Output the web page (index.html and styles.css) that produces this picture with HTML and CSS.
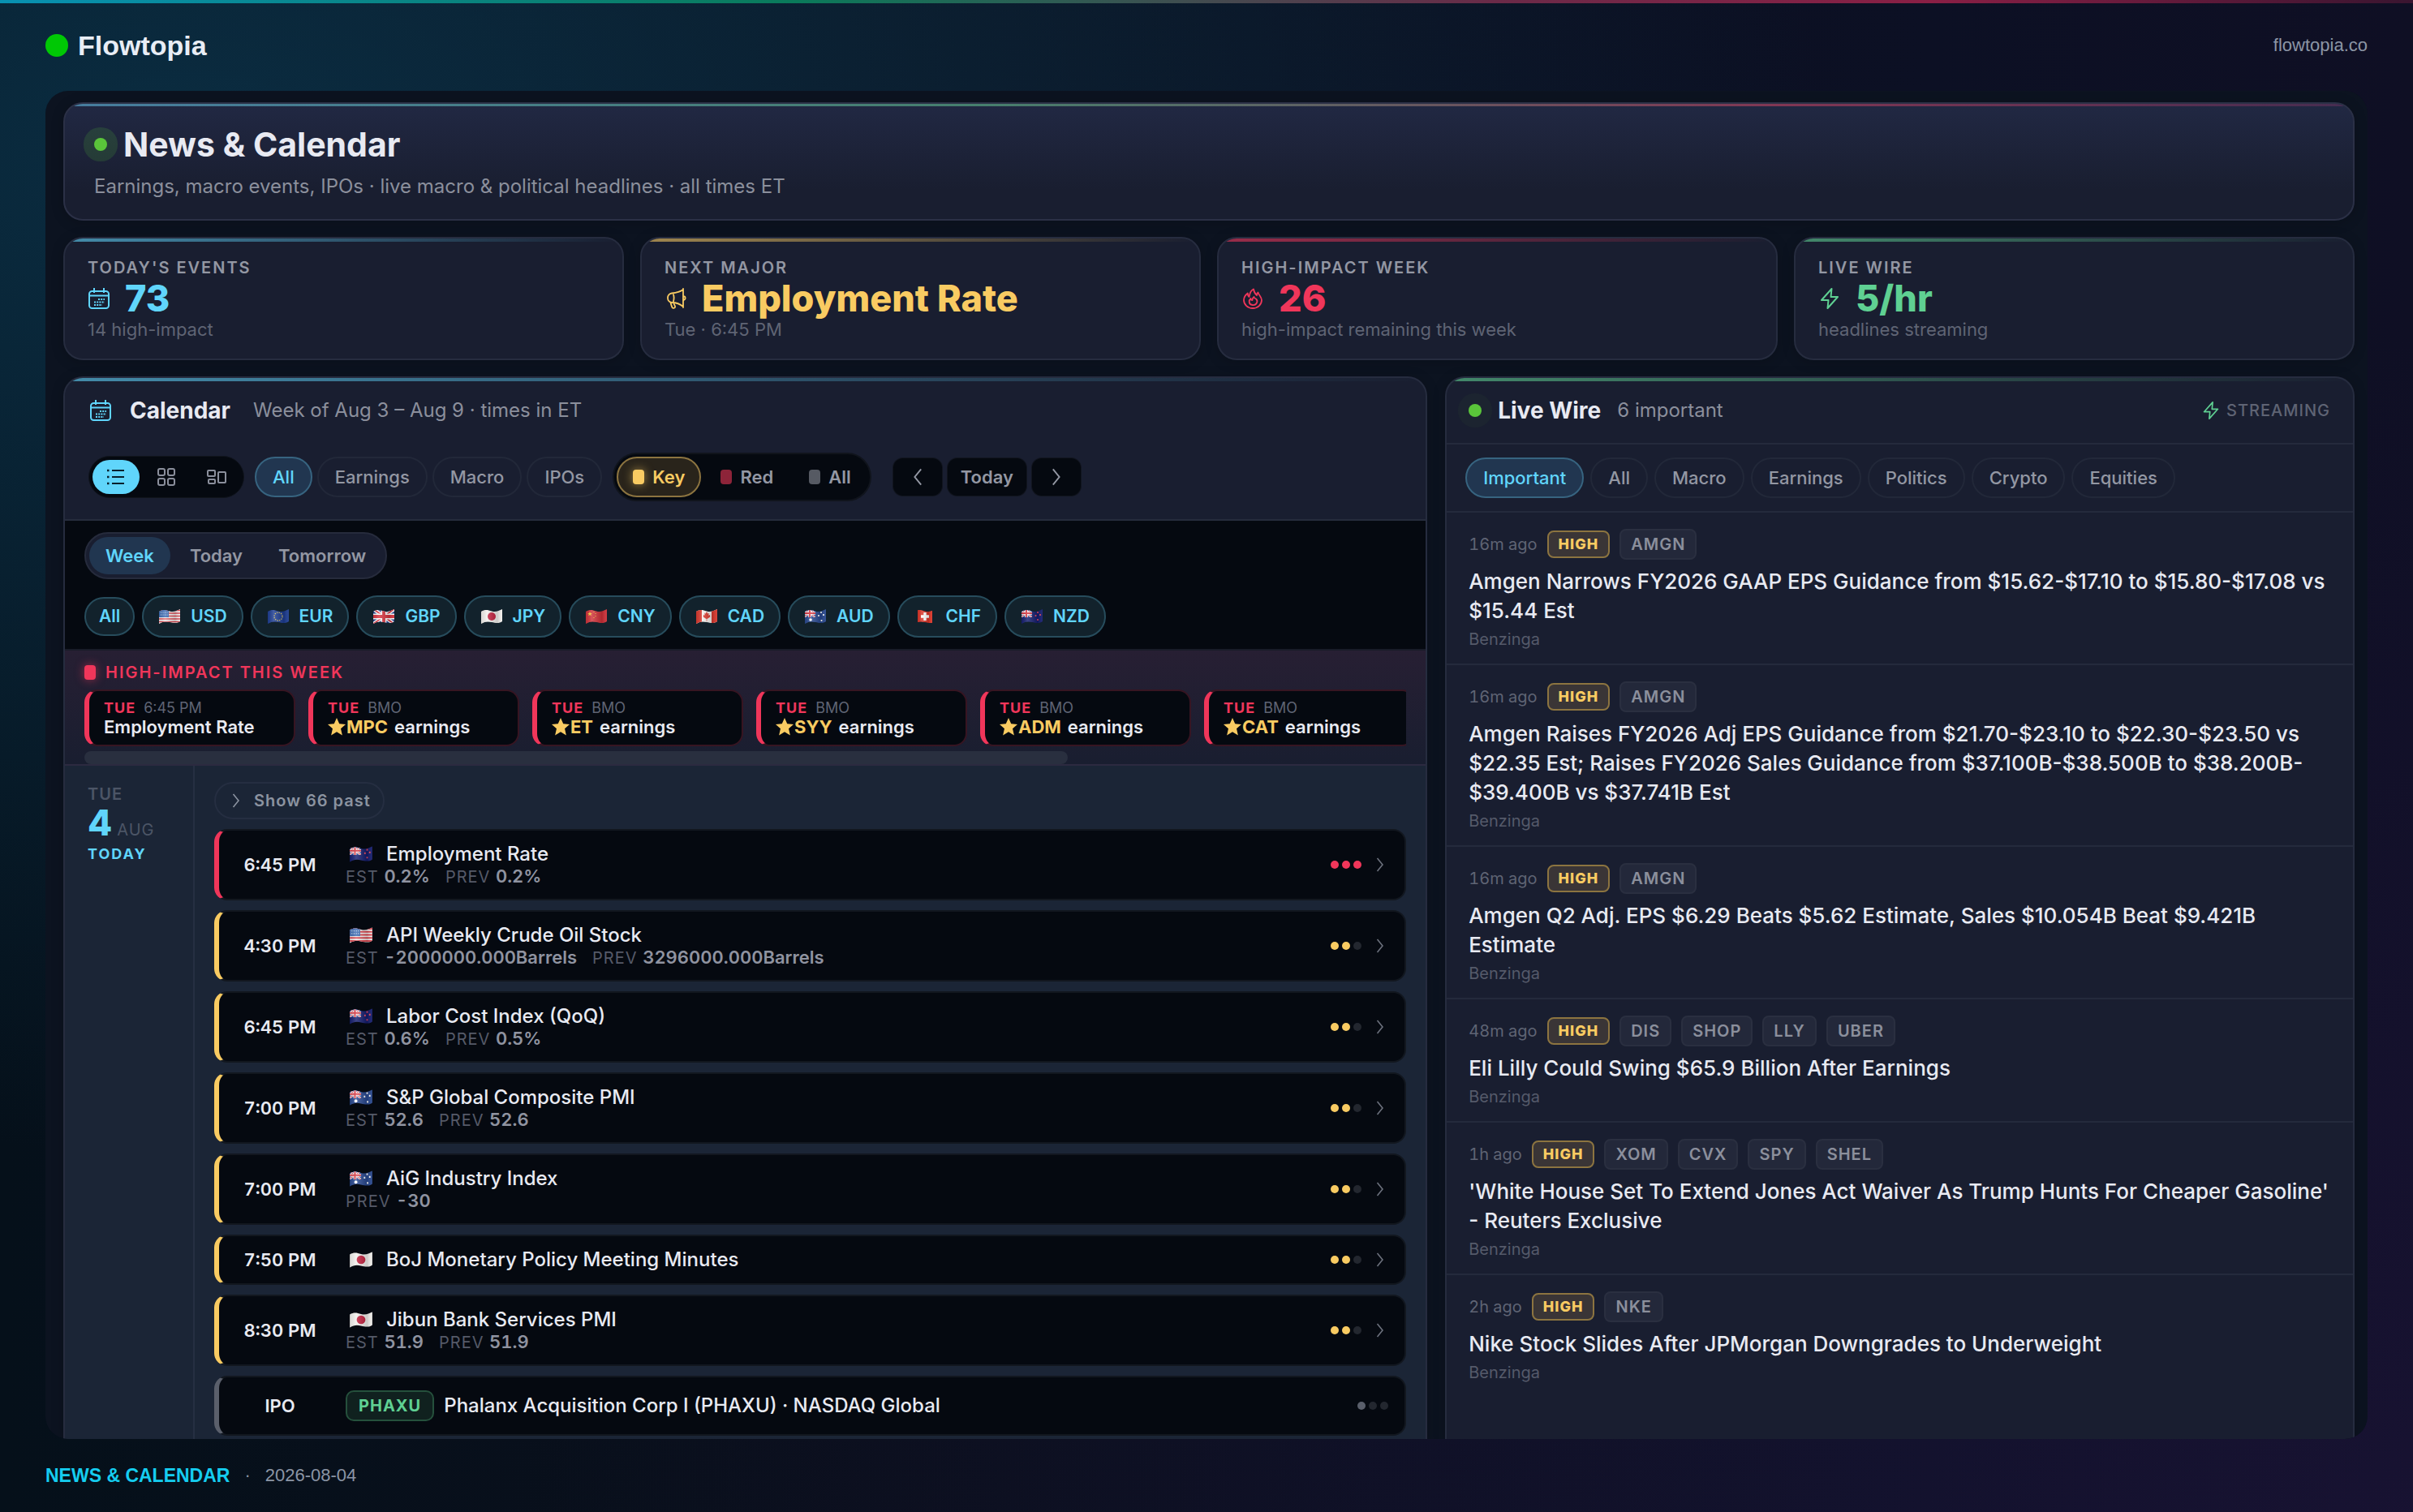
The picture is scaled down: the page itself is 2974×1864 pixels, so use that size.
FILE: index.html
```html
<!DOCTYPE html>
<html lang="en">
<head>
<meta charset="utf-8">
<title>Flowtopia - News &amp; Calendar</title>
<link rel="stylesheet" href="styles.css">
</head>
<body>
<svg class="defs" aria-hidden="true">
  <defs>
    <clipPath id="wave"><path d="M1 4C6 1 9 2 14 3.500S23 3 27 1V16C23 19 19 18 14 17S6 16 1 19Z"/></clipPath>
    <linearGradient id="fold" x1="0" x2="1" y1="0" y2="0">
      <stop offset="0" stop-color="#000" stop-opacity=".1"/><stop offset=".3" stop-color="#fff" stop-opacity=".18"/>
      <stop offset=".75" stop-color="#000" stop-opacity=".16"/><stop offset="1" stop-color="#fff" stop-opacity=".06"/>
    </linearGradient>
  </defs>
  <symbol id="union" viewBox="0 0 14 10">
    <rect width="14" height="10" fill="#1f3a8a"/>
    <path d="M0 0L14 10M14 0L0 10" stroke="#fff" stroke-width="2.200"/><path d="M0 0L14 10M14 0L0 10" stroke="#d8343f" stroke-width=".9"/>
    <path d="M7 0V10M0 5H14" stroke="#fff" stroke-width="3.400"/><path d="M7 0V10M0 5H14" stroke="#d8343f" stroke-width="1.900"/>
  </symbol>
  <symbol id="us" viewBox="0 0 28 20"><g clip-path="url(#wave)"><rect width="28" height="20" fill="#f3f0f0"/><path d="M0 2.500H28M0 6H28M0 9.500H28M0 13H28M0 16.500H28" stroke="#d8424b" stroke-width="1.700"/><rect width="13" height="11" fill="#3d6cb4"/><path d="M3 5h9M3 8h9" stroke="#dfe8f5" stroke-dasharray="1 1.500"/><rect width="28" height="20" fill="url(#fold)"/></g></symbol>
  <symbol id="eu" viewBox="0 0 28 20"><g clip-path="url(#wave)"><rect width="28" height="20" fill="#1c3c92"/><circle cx="14" cy="10" r="5" fill="none" stroke="#d9c25c" stroke-width="1.300" stroke-dasharray="1.300 1.320"/><rect width="28" height="20" fill="url(#fold)"/></g></symbol>
  <symbol id="gb" viewBox="0 0 28 20"><g clip-path="url(#wave)"><use href="#union" width="28" height="20"/><rect width="28" height="20" fill="url(#fold)"/></g></symbol>
  <symbol id="jp" viewBox="0 0 28 20"><g clip-path="url(#wave)"><rect width="28" height="20" fill="#f4f1ee"/><circle cx="14" cy="10" r="5" fill="#c2213f"/><rect width="28" height="20" fill="url(#fold)"/></g></symbol>
  <symbol id="cn" viewBox="0 0 28 20"><g clip-path="url(#wave)"><rect width="28" height="20" fill="#cf2f37"/><path d="M6 4l.8 2h2l-1.600 1.300.6 2L6 8.100 4.200 9.300l.6-2L3.200 6h2z" fill="#f6cf3d"/><path d="M11 4v1M13 6v1M13 9v1M11 11v1" stroke="#f6cf3d"/><rect width="28" height="20" fill="url(#fold)"/></g></symbol>
  <symbol id="ca" viewBox="0 0 28 20"><g clip-path="url(#wave)"><rect width="28" height="20" fill="#f4f1ee"/><path d="M0 0H8V20H0zM20 0H28V20H20z" fill="#d9372c"/><path d="M14 4l1.300 2.400 1.400-.6-.4 3 2-1-.4 1.800.7.600L15 12.800l-.7.200V16h-.6v-3l-.7-.2-3.600-2.600.7-.6L9.700 7.800l2 1-.4-3 1.400.6z" fill="#d9372c"/><rect width="28" height="20" fill="url(#fold)"/></g></symbol>
  <symbol id="au" viewBox="0 0 28 20"><g clip-path="url(#wave)"><rect width="28" height="20" fill="#27478f"/><use href="#union" y="1" width="14" height="10"/><circle cx="8" cy="14" r="1.800" fill="#fff"/><path d="M21 4v2M18 8v2M24 7v2M21.500 14v2" stroke="#fff" stroke-width="1.700"/><rect width="28" height="20" fill="url(#fold)"/></g></symbol>
  <symbol id="nz" viewBox="0 0 28 20"><g clip-path="url(#wave)"><rect width="28" height="20" fill="#141c6e"/><use href="#union" y="1" width="14" height="10"/><path d="M21 4v2M18.500 8v2M24 7v2M21 13v2" stroke="#e0455c" stroke-width="1.700"/><rect width="28" height="20" fill="url(#fold)"/></g></symbol>
  <symbol id="ch" viewBox="0 0 28 20"><g clip-path="url(#wave)"><rect x="5" width="18" height="20" fill="#dc3427"/><path d="M14 5v10M9 10h10" stroke="#fff" stroke-width="3.400"/><rect x="5" width="18" height="20" fill="url(#fold)"/></g></symbol>
  <symbol id="cal" viewBox="0 0 26 26" fill="none" stroke="currentColor" stroke-width="2"><rect x="1" y="4" width="24" height="21" rx="3.500"/><path d="M1 9.500H25M7 0V6M19 0V6"/><path d="M12 14H20M7 17.500H20M7 21H17" stroke-dasharray="2 1.200"/></symbol>
  <symbol id="horn" viewBox="0 0 26 26" fill="none" stroke="currentColor" stroke-width="1.800" stroke-linejoin="round" stroke-linecap="round"><path d="M22 2C18 5 13 6 8 6.500A5.800 5.800 0 0 0 8 18C13 18 18 19.500 22 23M22 1V24M9.500 6.500C11 10 11 14 9.500 18M22 10C25.500 10.500 25.500 14.500 22 15M6.500 18C7 20 7.500 22 8.500 24C9.500 25.500 12.500 25 12 22.500C11.500 21 10.500 20.500 10.500 18.500"/></symbol>
  <symbol id="flame" viewBox="0 0 26 26" fill="none" stroke="currentColor" stroke-width="1.800" stroke-linejoin="round"><path d="M14 1.500C9 4 9.500 8 8.500 11C7 10 6.800 8.500 6.800 6.500C3.500 9 2 12 2 15A11 10 0 0 0 24 15C24 11 21 10 19.500 5.500C18.500 6.500 18 8 18 9C15.500 7 14.500 5 14 1.500Z"/><path d="M14.500 11C13 12 12.500 13.500 12.500 15C11 15 10.500 14 10.500 13C8 15 7.500 20.500 12.800 21C18 21.500 20 16 17 13.500C15.500 13 14.700 12.500 14.500 11Z"/></symbol>
  <symbol id="bolt" viewBox="0 0 26 26" fill="none" stroke="currentColor" stroke-width="2" stroke-linejoin="round"><path d="M15.500 1L3 15H11.500L10.500 25L23 11H14.500Z"/></symbol>
  <symbol id="next" viewBox="0 0 20 20" fill="none" stroke="currentColor" stroke-width="1.600"><path d="M6.500 2L13 10L6.500 18"/></symbol>
  <symbol id="prev" viewBox="0 0 20 20" fill="none" stroke="currentColor" stroke-width="1.600"><path d="M13.500 2L7 10L13.500 18"/></symbol>
  <symbol id="star" viewBox="0 0 24 24" fill="currentColor"><path d="M12 0L15.500 8L24 8.800L17.500 14.500L19.500 23.500L12 18.700L4.500 23.500L6.500 14.500L0 8.800L8.500 8Z"/></symbol>
</svg>

<header class="topbar">
  <a class="brand" href="#"><span class="brand-dot"></span>Flowtopia</a>
  <a class="site" href="#">flowtopia.co</a>
</header>

<main class="app">
  <section class="card hero">
    <h1><span class="live-dot"></span>News &amp; Calendar</h1>
    <p>Earnings, macro events, IPOs · live macro &amp; political headlines · all times ET</p>
  </section>

  <section class="stats">
    <div class="card stat blue">
      <div class="label">TODAY'S EVENTS</div>
      <div class="value"><svg><use href="#cal"/></svg>73</div>
      <div class="sub">14 high-impact</div>
    </div>
    <div class="card stat gold">
      <div class="label">NEXT MAJOR</div>
      <div class="value"><svg><use href="#horn"/></svg>Employment Rate</div>
      <div class="sub">Tue · 6:45 PM</div>
    </div>
    <div class="card stat red">
      <div class="label">HIGH-IMPACT WEEK</div>
      <div class="value"><svg><use href="#flame"/></svg>26</div>
      <div class="sub">high-impact remaining this week</div>
    </div>
    <div class="card stat green">
      <div class="label">LIVE WIRE</div>
      <div class="value"><svg><use href="#bolt"/></svg>5/hr</div>
      <div class="sub">headlines streaming</div>
    </div>
  </section>

  <div class="panels">
    <section class="card panel blue">
      <div class="cal-head">
        <div class="title-row"><svg class="title-icon"><use href="#cal"/></svg><h2>Calendar</h2><span>Week of Aug 3 – Aug 9 · times in ET</span></div>
        <div class="controls">
          <div class="views">
            <button class="on" aria-label="List"><svg viewBox="0 0 24 24"><path d="M7 4H22M7 12H22M7 20H22"/><path d="M1 4H3.500M1 12H3.500M1 20H3.500" stroke-width="2.500"/></svg></button>
            <button aria-label="Grid"><svg viewBox="0 0 24 24"><rect x="2" y="2" width="8" height="8" rx="2"/><rect x="14" y="2" width="8" height="8" rx="2"/><rect x="2" y="14" width="8" height="8" rx="2"/><rect x="14" y="14" width="8" height="8" rx="2"/></svg></button>
            <button aria-label="Board"><svg viewBox="0 0 24 24"><rect x="1" y="4" width="9" height="7" rx="1"/><rect x="14" y="6" width="9" height="13" rx="1"/><rect x="2" y="15" width="8" height="5" rx="1"/></svg></button>
          </div>
          <div class="chips">
            <button class="chip on">All</button>
            <button class="chip">Earnings</button>
            <button class="chip">Macro</button>
            <button class="chip">IPOs</button>
          </div>
          <div class="levels">
            <button class="key"><i></i>Key</button>
            <button class="hot"><i></i>Red</button>
            <button><i></i>All</button>
          </div>
          <div class="nav">
            <button aria-label="Previous week"><svg><use href="#prev"/></svg></button>
            <button class="today">Today</button>
            <button aria-label="Next week"><svg><use href="#next"/></svg></button>
          </div>
        </div>
      </div>

      <div class="toolbar">
        <div class="range"><button class="on">Week</button><button>Today</button><button>Tomorrow</button></div>
        <div class="currencies">
          <button class="all">All</button>
          <button><svg class="flag"><use href="#us"/></svg>USD</button>
          <button><svg class="flag"><use href="#eu"/></svg>EUR</button>
          <button><svg class="flag"><use href="#gb"/></svg>GBP</button>
          <button><svg class="flag"><use href="#jp"/></svg>JPY</button>
          <button><svg class="flag"><use href="#cn"/></svg>CNY</button>
          <button><svg class="flag"><use href="#ca"/></svg>CAD</button>
          <button><svg class="flag"><use href="#au"/></svg>AUD</button>
          <button><svg class="flag"><use href="#ch"/></svg>CHF</button>
          <button><svg class="flag"><use href="#nz"/></svg>NZD</button>
        </div>
      </div>

      <div class="impact">
        <h3><i></i>HIGH-IMPACT THIS WEEK</h3>
        <div class="impact-list">
          <div class="impact-card"><p><b>TUE</b>6:45 PM</p><strong>Employment Rate</strong></div>
          <div class="impact-card"><p><b>TUE</b>BMO</p><strong><em><svg><use href="#star"/></svg>MPC</em> earnings</strong></div>
          <div class="impact-card"><p><b>TUE</b>BMO</p><strong><em><svg><use href="#star"/></svg>ET</em> earnings</strong></div>
          <div class="impact-card"><p><b>TUE</b>BMO</p><strong><em><svg><use href="#star"/></svg>SYY</em> earnings</strong></div>
          <div class="impact-card"><p><b>TUE</b>BMO</p><strong><em><svg><use href="#star"/></svg>ADM</em> earnings</strong></div>
          <div class="impact-card"><p><b>TUE</b>BMO</p><strong><em><svg><use href="#star"/></svg>CAT</em> earnings</strong></div>
        </div>
        <div class="scroll"><div></div></div>
      </div>

      <div class="day">
        <div class="date">
          <div class="dow">TUE</div>
          <div class="num">4<span>AUG</span></div>
          <div class="now">TODAY</div>
        </div>
        <div class="events">
          <button class="past"><svg><use href="#next"/></svg>Show 66 past</button>
          <div class="event high">
            <time>6:45 PM</time>
            <div class="info"><h4><svg class="flag"><use href="#nz"/></svg>Employment Rate</h4><p>EST <b>0.2%</b><span>PREV <b>0.2%</b></span></p></div>
            <div class="dots"><i></i><i></i><i></i></div><svg class="more"><use href="#next"/></svg>
          </div>
          <div class="event">
            <time>4:30 PM</time>
            <div class="info"><h4><svg class="flag"><use href="#us"/></svg>API Weekly Crude Oil Stock</h4><p>EST <b>-2000000.000Barrels</b><span>PREV <b>3296000.000Barrels</b></span></p></div>
            <div class="dots"><i></i><i></i><i></i></div><svg class="more"><use href="#next"/></svg>
          </div>
          <div class="event">
            <time>6:45 PM</time>
            <div class="info"><h4><svg class="flag"><use href="#nz"/></svg>Labor Cost Index (QoQ)</h4><p>EST <b>0.6%</b><span>PREV <b>0.5%</b></span></p></div>
            <div class="dots"><i></i><i></i><i></i></div><svg class="more"><use href="#next"/></svg>
          </div>
          <div class="event">
            <time>7:00 PM</time>
            <div class="info"><h4><svg class="flag"><use href="#au"/></svg>S&amp;P Global Composite PMI</h4><p>EST <b>52.6</b><span>PREV <b>52.6</b></span></p></div>
            <div class="dots"><i></i><i></i><i></i></div><svg class="more"><use href="#next"/></svg>
          </div>
          <div class="event">
            <time>7:00 PM</time>
            <div class="info"><h4><svg class="flag"><use href="#au"/></svg>AiG Industry Index</h4><p>PREV <b>-30</b></p></div>
            <div class="dots"><i></i><i></i><i></i></div><svg class="more"><use href="#next"/></svg>
          </div>
          <div class="event">
            <time>7:50 PM</time>
            <div class="info"><h4><svg class="flag"><use href="#jp"/></svg>BoJ Monetary Policy Meeting Minutes</h4></div>
            <div class="dots"><i></i><i></i><i></i></div><svg class="more"><use href="#next"/></svg>
          </div>
          <div class="event">
            <time>8:30 PM</time>
            <div class="info"><h4><svg class="flag"><use href="#jp"/></svg>Jibun Bank Services PMI</h4><p>EST <b>51.9</b><span>PREV <b>51.9</b></span></p></div>
            <div class="dots"><i></i><i></i><i></i></div><svg class="more"><use href="#next"/></svg>
          </div>
          <div class="event low">
            <time>IPO</time>
            <div class="info"><h4><span class="ticker">PHAXU</span>Phalanx Acquisition Corp I (PHAXU) · NASDAQ Global</h4></div>
            <div class="dots"><i></i><i></i><i></i></div>
          </div>
        </div>
      </div>
    </section>

    <section class="card panel green">
      <div class="wire-head">
        <span class="live-dot"></span><h2>Live Wire</h2><span>6 important</span>
        <div class="streaming"><svg><use href="#bolt"/></svg>STREAMING</div>
      </div>
      <div class="wire-tabs">
        <button class="chip on">Important</button>
        <button class="chip">All</button>
        <button class="chip">Macro</button>
        <button class="chip">Earnings</button>
        <button class="chip">Politics</button>
        <button class="chip">Crypto</button>
        <button class="chip">Equities</button>
      </div>
      <article class="news">
        <div class="tags"><time>16m ago</time><b>HIGH</b><span>AMGN</span></div>
        <h4>Amgen Narrows FY2026 GAAP EPS Guidance from $15.62-$17.10 to $15.80-$17.08 vs $15.44 Est</h4>
        <p>Benzinga</p>
      </article>
      <article class="news">
        <div class="tags"><time>16m ago</time><b>HIGH</b><span>AMGN</span></div>
        <h4>Amgen Raises FY2026 Adj EPS Guidance from $21.70-$23.10 to $22.30-$23.50 vs $22.35 Est; Raises FY2026 Sales Guidance from $37.100B-$38.500B to $38.200B-<wbr>$39.400B vs $37.741B Est</h4>
        <p>Benzinga</p>
      </article>
      <article class="news">
        <div class="tags"><time>16m ago</time><b>HIGH</b><span>AMGN</span></div>
        <h4>Amgen Q2 Adj. EPS $6.29 Beats $5.62 Estimate, Sales $10.054B Beat $9.421B Estimate</h4>
        <p>Benzinga</p>
      </article>
      <article class="news">
        <div class="tags"><time>48m ago</time><b>HIGH</b><span>DIS</span><span>SHOP</span><span>LLY</span><span>UBER</span></div>
        <h4>Eli Lilly Could Swing $65.9 Billion After Earnings</h4>
        <p>Benzinga</p>
      </article>
      <article class="news">
        <div class="tags"><time>1h ago</time><b>HIGH</b><span>XOM</span><span>CVX</span><span>SPY</span><span>SHEL</span></div>
        <h4>'White House Set To Extend Jones Act Waiver As Trump Hunts For Cheaper Gasoline' - Reuters Exclusive</h4>
        <p>Benzinga</p>
      </article>
      <article class="news">
        <div class="tags"><time>2h ago</time><b>HIGH</b><span>NKE</span></div>
        <h4>Nike Stock Slides After JPMorgan Downgrades to Underweight</h4>
        <p>Benzinga</p>
      </article>
    </section>
  </div>
</main>

<footer class="footer"><b>NEWS &amp; CALENDAR</b><span>·</span><time>2026-08-04</time></footer>
</body>
</html>
```

FILE: styles.css
```css
* {
  box-sizing: border-box;
}

body, h1, h2, h3, h4, p {
  margin: 0;
}

body {
  display: flex;
  flex-direction: column;
  height: 100vh;
  overflow: hidden;
  font-family: Inter, "Open Sans", sans-serif;
  font-size: 22px;
  color: #e8eaf2;
  background:
    radial-gradient(ellipse at 8% 10%, rgba(12, 54, 78, .75), transparent 52%),
    radial-gradient(ellipse at 100% 100%, rgba(34, 22, 66, .45), transparent 55%),
    linear-gradient(90deg, #05101a, #0a0f1c 35%, #0c1024 80%, #0f0f24);
}

button {
  display: inline-flex;
  align-items: center;
  justify-content: center;
  font-family: inherit;
  font-size: 22px;
  font-weight: 500;
  line-height: 26px;
  color: #9397a3;
  background: none;
  border: 0;
  padding: 0;
  cursor: pointer;
}

time {
  font-variant-numeric: tabular-nums;
}

svg {
  display: block;
  flex: none;
}

.defs {
  position: absolute;
  width: 0;
  height: 0;
}

/* top bar */
.topbar {
  flex: none;
  display: flex;
  align-items: center;
  justify-content: space-between;
  height: 112px;
  padding: 0 56px 4px;
  border-top: 4px solid;
  border-image: linear-gradient(90deg, #0891b2, #0a7a5a 33%, #6b2a48 62%, #8a1f45 80%, #3a1530) 1;
  font-family: "Liberation Sans", Arial, sans-serif;
}

.brand {
  display: flex;
  align-items: center;
  gap: 12px;
  font-size: 34px;
  font-weight: bold;
  color: #e8edf5;
  text-decoration: none;
}

.brand-dot {
  width: 28px;
  height: 28px;
  border-radius: 50%;
  background: #00c805;
}

.site {
  font-size: 22px;
  color: #8b95a5;
  text-decoration: none;
}

.app {
  flex: 1;
  min-height: 0;
  overflow: hidden;
  display: flex;
  flex-direction: column;
  gap: 20px;
  margin: 0 56px;
  padding: 14px 16px 0 22px;
  border-radius: 28px;
  background: #0c1320;
}

.card {
  position: relative;
  overflow: hidden;
  border: 2px solid #262c3f;
  border-radius: 24px;
  background: #191e30;
  box-shadow: 0 2px 16px rgba(0, 0, 0, .2);
}

.card::before {
  content: "";
  position: absolute;
  top: 0;
  left: 0;
  right: 0;
  height: 4px;
  background: linear-gradient(90deg, var(--tone), transparent);
  opacity: .6;
}

.blue { --tone: #60d5fb; }
.gold { --tone: #f9cb62; }
.red { --tone: #f0365a; }
.green { --tone: #5fd092; }

/* hero */
.hero {
  flex: none;
  padding: 26px 36px 25px;
  border-color: #2b3046;
  background: linear-gradient(#212843, #191e30 75%);
}

.hero::before {
  height: 3px;
  background: linear-gradient(90deg, #60b5db, #5fb98a 40%, #c0405f 75%, #60305a);
}

.hero h1 {
  display: flex;
  align-items: center;
  gap: 20px;
  font-size: 41px;
  line-height: 48px;
  font-weight: 700;
}

.hero p {
  margin-top: 13px;
  font-size: 24px;
  line-height: 30px;
  color: #8b8f9c;
}

.live-dot {
  width: 16px;
  height: 16px;
  border-radius: 50%;
  background: #5ac53a;
  box-shadow: 0 0 0 13px rgba(90, 197, 58, .16);
}

/* stats */
.stats {
  flex: none;
  display: grid;
  grid-template-columns: repeat(4, 1fr);
  gap: 20px;
}

.stat {
  padding: 24px 28px;
}

.label {
  font-size: 20px;
  line-height: 24px;
  font-weight: 600;
  letter-spacing: 2px;
  color: #9397a3;
}

.value {
  display: flex;
  align-items: center;
  gap: 18px;
  font-size: 45px;
  line-height: 52px;
  font-weight: 800;
  color: var(--tone);
}

.value svg {
  width: 28px;
  height: 26px;
}

.sub {
  line-height: 24px;
  color: #5f6474;
}

/* panels */
.panels {
  flex: 1;
  min-height: 0;
  display: grid;
  grid-template-columns: 3fr 2fr;
  gap: 22px;
}

.panel {
  display: flex;
  flex-direction: column;
  border-bottom: 0;
  border-radius: 24px 24px 0 0;
}

h2 {
  font-size: 28px;
  font-weight: 700;
  line-height: 32px;
}

.cal-head {
  padding: 24px 29px 22px;
  border-bottom: 2px solid #262c3c;
}

.title-row, .wire-head {
  display: flex;
  align-items: center;
  font-size: 24px;
  line-height: 32px;
  color: #8b8f9c;
}

.title-row h2, .wire-head h2 {
  color: #e8eaf2;
}

.title-row h2 {
  margin: 0 28px 0 21px;
}

.title-icon {
  width: 30px;
  height: 26px;
  color: #60d5fb;
}

.controls {
  display: flex;
  align-items: center;
  gap: 13px;
  margin-top: 36px;
}

.views {
  display: flex;
  gap: 4px;
  padding: 4px;
  border: 1px solid #10141c;
  border-radius: 26px;
  background: #050910;
}

.views button {
  width: 58px;
  height: 42px;
  border-radius: 21px;
}

.views svg {
  width: 24px;
  height: 24px;
  fill: none;
  stroke: #8b8f9c;
  stroke-width: 2;
}

.views .on {
  background: #60d5fb;
}

.views .on svg {
  stroke: #08202c;
}

.chips {
  display: flex;
  gap: 6px;
}

.chip {
  height: 50px;
  padding: 0 20px;
  border: 2px solid #222839;
  border-radius: 25px;
}

.chip.on {
  color: #60d5fb;
  border-color: #376480;
  background: #213650;
}

.levels {
  display: flex;
  gap: 4px;
  padding: 3px;
  border: 2px solid #10141c;
  border-radius: 30px;
  background: #050910;
}

.levels button {
  gap: 10px;
  height: 50px;
  padding: 0 20px;
  font-weight: 600;
}

.levels i {
  width: 14px;
  height: 18px;
  border-radius: 4px;
  background: #565a63;
}

.levels .hot i {
  background: #8d2439;
}

.levels .key {
  padding: 0 18px;
  border: 2px solid #8c7440;
  border-radius: 25px;
  color: #f9cb62;
  background: #29241b;
}

.levels .key i {
  background: #f9cb62;
  box-shadow: 0 0 12px rgba(249, 203, 98, .6);
}

.nav {
  display: flex;
  gap: 7px;
  margin-left: 14px;
}

.nav button {
  width: 60px;
  height: 46px;
  border-radius: 12px;
  font-weight: 600;
  background: #050910;
  box-shadow: 0 0 0 1px #11151e;
}

.nav .today {
  width: auto;
  padding: 0 16px;
}

.nav svg {
  width: 24px;
  height: 24px;
}

/* range and currency filters */
.toolbar {
  display: flex;
  flex-direction: column;
  align-items: flex-start;
  gap: 20px;
  padding: 14px 24px;
  background: #050910;
}

.range {
  display: flex;
  gap: 4px;
  padding: 4px;
  border: 2px solid #262b3c;
  border-radius: 29px;
  background: #191e30;
}

.range button {
  height: 46px;
  padding: 0 20px;
  border-radius: 23px;
  font-weight: 600;
}

.range .on {
  color: #60d5fb;
  background: #213650;
}

.currencies {
  display: flex;
  align-items: center;
  gap: 9px;
}

.currencies button {
  gap: 12px;
  height: 52px;
  padding: 0 18px;
  border: 2px solid #274c5c;
  border-radius: 26px;
  font-size: 21px;
  font-weight: 600;
  color: #60d5fb;
  background: #12222c;
}

.currencies .all {
  height: 48px;
  padding: 0 16px;
}

.flag {
  width: 28px;
  height: 20px;
}

/* high-impact strip */
.impact {
  padding: 14px 24px 0;
  border-top: 2px solid #191c28;
  border-bottom: 2px solid #2c2a40;
  background: linear-gradient(#271f33, #191e30);
}

.impact h3 {
  display: flex;
  align-items: center;
  gap: 12px;
  font-size: 20px;
  line-height: 26px;
  font-weight: 600;
  letter-spacing: 2px;
  color: #f0365a;
}

.impact h3 i {
  width: 14px;
  height: 18px;
  border-radius: 4px;
  background: #f0365a;
  box-shadow: 0 0 12px rgba(240, 54, 90, .6);
}

.impact-list {
  display: flex;
  gap: 16px;
  margin-top: 8px;
  overflow: hidden;
}

.impact-card {
  flex: none;
  width: 260px;
  padding: 10px 18px;
  border: 2px solid #371522;
  border-left: 6px solid #f0365a;
  border-radius: 16px;
  background: #050910;
}

.impact-card p {
  font-size: 18px;
  line-height: 22px;
  color: #5f6474;
}

.impact-card b {
  margin-right: 10px;
  letter-spacing: 1px;
  color: #f0365a;
}

.impact-card strong {
  display: flex;
  gap: 8px;
  font-weight: 600;
  line-height: 24px;
}

.impact-card em {
  display: flex;
  align-items: center;
  gap: 1px;
  font-style: normal;
  font-weight: 700;
  color: #f9cb62;
}

.impact-card em svg {
  width: 22px;
  height: 22px;
}

.scroll {
  margin-top: 6px;
}

.scroll div {
  width: 74.4%;
  height: 16px;
  border-radius: 8px;
  background: #292f3f;
}

/* day agenda */
.day {
  flex: 1;
  display: grid;
  grid-template-columns: 160px 1fr;
  background: #1b2536;
}

.date {
  padding: 22px 28px;
  border-right: 2px solid #262f42;
  font-size: 20px;
  line-height: 26px;
  color: #4c5566;
}

.dow {
  font-weight: 600;
  letter-spacing: 1px;
}

.num {
  font-size: 44px;
  line-height: 44px;
  font-weight: 800;
  color: #60d5fb;
}

.num span {
  margin-left: 6px;
  font-size: 20px;
  line-height: 20px;
  font-weight: 400;
  letter-spacing: 1px;
  color: #4c5566;
}

.now {
  margin-top: 4px;
  font-size: 18px;
  font-weight: 700;
  letter-spacing: 2px;
  color: #60d5fb;
}

.events {
  display: flex;
  flex-direction: column;
  gap: 12px;
  padding: 20px 24px;
}

.past {
  align-self: flex-start;
  gap: 12px;
  height: 46px;
  padding: 0 15px;
  border: 2px solid #252e41;
  border-radius: 23px;
  font-size: 20px;
  font-weight: 600;
  letter-spacing: 1px;
  color: #8b93a0;
}

.past svg, .more {
  width: 20px;
  height: 20px;
}

.event {
  display: flex;
  align-items: center;
  padding: 14px 20px;
  border: 2px solid #12171f;
  border-left: 6px solid #f9cb62;
  border-radius: 16px;
  background: #050910;
  --dot: #f9cb62;
}

.event time {
  width: 110px;
  text-align: center;
  font-weight: 600;
}

.info {
  flex: 1;
  margin-left: 26px;
}

.info h4 {
  display: flex;
  align-items: center;
  font-size: 24px;
  line-height: 30px;
  font-weight: 500;
}

.info .flag {
  width: 30px;
  height: 22px;
  margin: 0 16px 0 4px;
}

.info p {
  font-size: 20px;
  line-height: 26px;
  letter-spacing: 1px;
  color: #555a68;
}

.info p span {
  margin-left: 19px;
}

.info b {
  font-size: 22px;
  line-height: 20px;
  font-weight: 600;
  font-variant-numeric: tabular-nums;
  letter-spacing: 0;
  color: #8f93a0;
}

.dots {
  display: flex;
  gap: 4px;
}

.dots i {
  width: 10px;
  height: 10px;
  border-radius: 50%;
  background: var(--dot);
}

.dots i:last-child {
  background: #23272f;
}

.more {
  margin-left: 13px;
  color: #6c717d;
}

.high {
  border-left-color: #f0365a;
  --dot: #f0365a;
}

.high .dots i:last-child {
  background: #f0365a;
}

.low {
  border-left-color: #5a5f6b;
  --dot: #23272f;
}

.low .dots i:first-child {
  background: #5a5f6b;
}

.ticker {
  margin: 2px 12px 2px 0;
  padding: 2px 14px;
  border: 2px solid #25503c;
  border-radius: 10px;
  font-size: 20px;
  font-weight: 700;
  letter-spacing: 1px;
  color: #5fd092;
  background: #10211f;
}

/* live wire */
.wire-head {
  padding: 24px 28px 24px 27px;
  border-bottom: 2px solid #242a3c;
}

.wire-head .live-dot {
  box-shadow: 0 0 0 13px rgba(90, 197, 58, .04);
}

.wire-head h2 {
  margin: 0 20px;
}

.streaming {
  display: flex;
  align-items: center;
  gap: 8px;
  margin-left: auto;
  font-size: 20px;
  font-weight: 500;
  letter-spacing: 1px;
  color: #5f6474;
}

.streaming svg {
  width: 22px;
  height: 22px;
  color: #5fd092;
}

.wire-tabs {
  display: flex;
  gap: 8px;
  padding: 16px 23px;
  border-bottom: 2px solid #242a3c;
}

.news {
  padding: 20px 27px 18px;
  border-bottom: 2px solid #242a3c;
}

.news:last-child {
  border-bottom: 0;
}

.tags {
  display: flex;
  align-items: center;
  gap: 12px;
  font-size: 20px;
  line-height: 24px;
}

.tags time {
  color: #5f6474;
}

.tags b {
  padding: 3px 12px;
  border: 2px solid #8c7440;
  border-radius: 8px;
  font-size: 18px;
  font-weight: 800;
  letter-spacing: 1px;
  color: #f9cb62;
  background: #3a3536;
}

.tags span {
  padding: 5px 12px;
  border: 2px solid #2a2f40;
  border-radius: 8px;
  font-weight: 600;
  letter-spacing: 1px;
  color: #8b8f9c;
  background: #23283a;
}

.news h4 {
  margin: 9px 0 5px;
  font-size: 26px;
  line-height: 36px;
  font-weight: 500;
}

.news p {
  font-size: 20px;
  line-height: 24px;
  color: #555a6a;
}

.footer {
  flex: none;
  display: flex;
  align-items: center;
  gap: 18px;
  height: 90px;
  padding: 0 56px;
  font-family: "Liberation Sans", Arial, sans-serif;
  color: #8b95a5;
}

.footer b {
  font-size: 23px;
  color: #15cdf0;
}
```
